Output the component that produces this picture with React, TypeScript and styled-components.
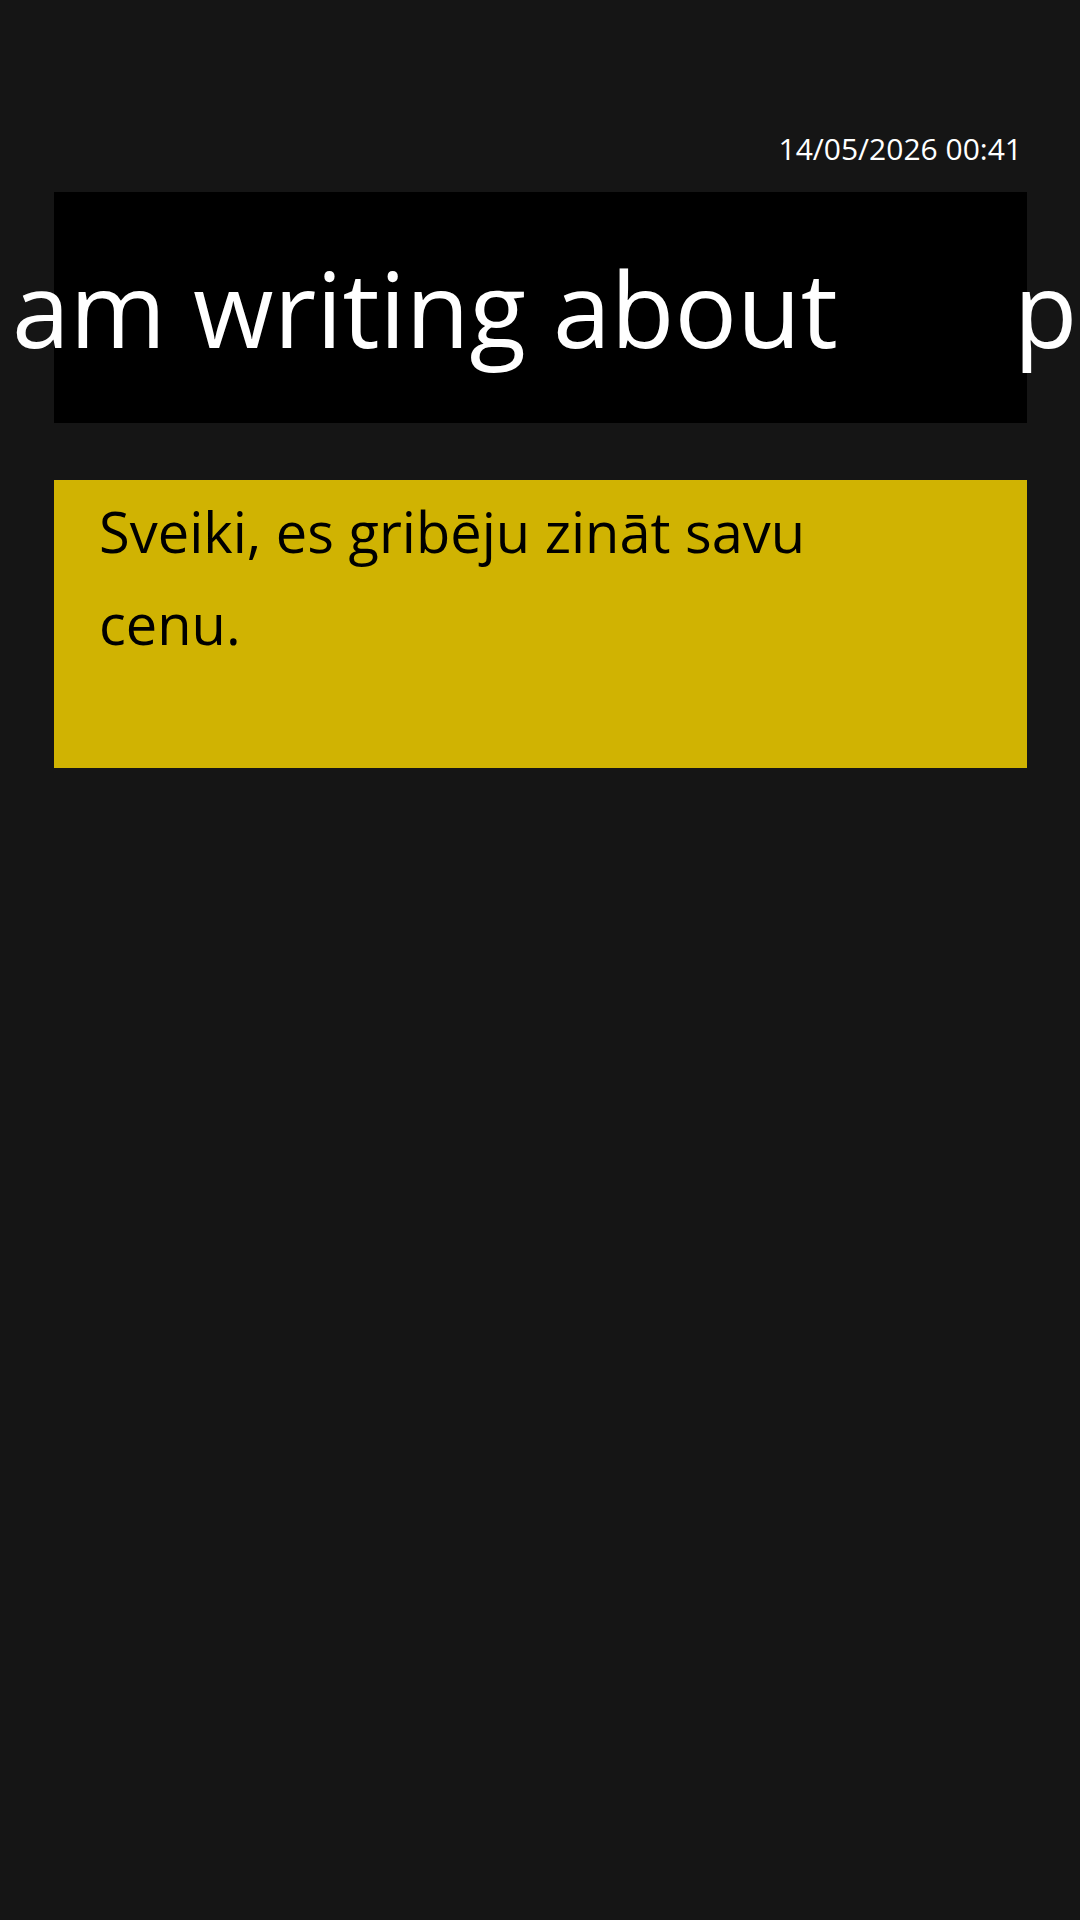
import React from "react";
import styled, { createGlobalStyle } from "styled-components";

const GlobalStyle = createGlobalStyle`
  html, body {
    margin: 0;
    padding: 0;
    background: #151515;
    overflow-x: hidden;
  }
  body {
    font-family: "Open Sans", "Noto Sans", sans-serif;
  }
`;

const Screen = styled.div`
  min-height: 1920px;
  padding: 128px 53px 0 54px;
  box-sizing: border-box;
  display: flex;
  flex-direction: column;
`;

const Clock = styled.div`
  align-self: flex-end;
  color: #ffffff;
  font-size: 30px;
  padding-right: 5px;
  margin-bottom: 23px;
`;

const Ticker = styled.div`
  height: 231px;
  background: #000000;
  display: flex;
  align-items: center;
  overflow: visible;
`;

const TickerTrack = styled.div`
  display: flex;
  gap: 176px;
  margin-left: -42px;
  white-space: nowrap;
  color: #ffffff;
  font-size: 104px;
`;

const Note = styled.div`
  margin-top: 57px;
  min-height: 288px;
  box-sizing: border-box;
  background: #d0b302;
  padding: 5px 110px 0 45px;
  color: #000000;
  font-size: 56px;
  line-height: 92px;
`;

export default function App() {
  return (
    <>
      <GlobalStyle />
      <Screen>
        <Clock>14/05/2026 00:41</Clock>
        <Ticker>
          <TickerTrack>
            <span>am writing about</span>
            <span>p</span>
          </TickerTrack>
        </Ticker>
        <Note>Sveiki, es gribēju zināt savu cenu.</Note>
      </Screen>
    </>
  );
}
